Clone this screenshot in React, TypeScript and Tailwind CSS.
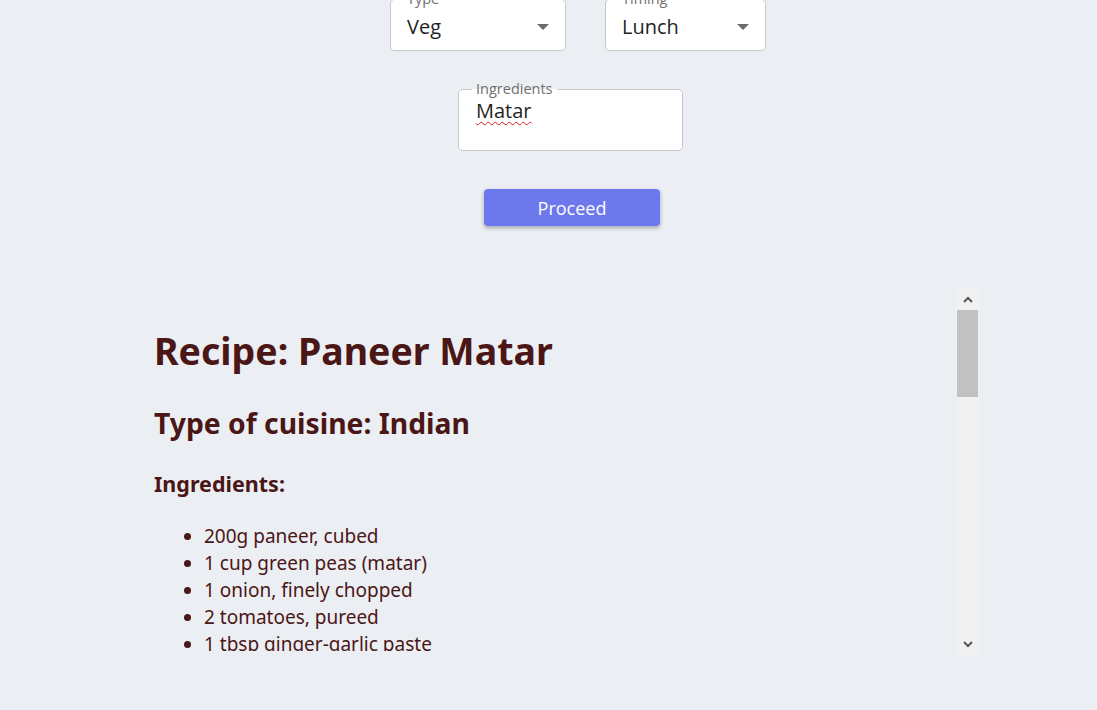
import React from "react";

function Caret() {
  return (
    <svg width="12" height="6" viewBox="0 0 12 6" className="shrink-0">
      <path d="M0 0 L12 0 L6 6 Z" fill="#6b6b6b" />
    </svg>
  );
}

function SelectBox({ label, value, width }: { label: string; value: string; width: string }) {
  return (
    <fieldset className={`${width} h-[59px] border border-[#c8c8c8] rounded-[4px] bg-white pl-[12px] pr-[16px] flex items-center`}>
      <legend className="px-[4px] text-[14.5px] leading-[14px] text-[#6f6f6f]">{label}</legend>
      <div className="flex-1 flex items-center justify-between -mt-[3px]">
        <span className="text-[20px] leading-[26px] text-[#1f1f1f] pl-[4px]">{value}</span>
        <Caret />
      </div>
    </fieldset>
  );
}

export default function App() {
  const items = [
    "200g paneer, cubed",
    "1 cup green peas (matar)",
    "1 onion, finely chopped",
    "2 tomatoes, pureed",
    "1 tbsp ginger-garlic paste",
    "2 green chillies, slit",
    "1 tsp cumin seeds",
  ];
  return (
    <div className="h-[710px] overflow-hidden bg-[#ebeef3] font-['Open_Sans','Noto_Sans',sans-serif]">
      <div className="-mt-[8px] flex flex-col">
        <div className="flex pl-[390px] gap-[39px]">
          <SelectBox label="Type" value="Veg" width="w-[176px]" />
          <SelectBox label="Timing" value="Lunch" width="w-[161px]" />
        </div>
        <div className="mt-[31px] pl-[458px]">
          <fieldset className="w-[225px] h-[69px] border border-[#c8c8c8] rounded-[4px] bg-white pl-[13px] pr-[12px]">
            <legend className="px-[4px] text-[14.5px] leading-[14px] text-[#6f6f6f]">Ingredients</legend>
            <div className="pl-[4px] mt-[2px] text-[20px] leading-[26px] text-[#1f1f1f]">
              <span className="underline decoration-wavy decoration-[#d42020] decoration-1 underline-offset-[3px]">Matar</span>
            </div>
          </fieldset>
        </div>
        <div className="mt-[38px] pl-[484px]">
          <button className="w-[176px] h-[37px] rounded-[4px] bg-[#6c78ec] text-white text-[18px] leading-[24px] shadow-[0_2px_4px_rgba(0,0,0,0.3)]">
            Proceed
          </button>
        </div>
        <div className="mt-[62px] mx-auto w-[861px] h-[367px] flex">
          <div className="flex-1">
            <div className="h-[363px] overflow-hidden pl-[36px] text-[#4b1616] font-['Noto_Sans','Open_Sans',sans-serif]">
              <h1 className="mt-[39px] text-[37.5px] leading-[48px] font-bold">Recipe: Paneer Matar</h1>
              <h2 className="mt-[30px] text-[28.3px] leading-[36px] font-bold">Type of cuisine: Indian</h2>
              <h3 className="mt-[29px] text-[21.5px] leading-[28px] font-bold">Ingredients:</h3>
              <ul className="mt-[25px] pl-[50px] list-disc text-[19px] leading-[27px]">
                {items.map((t) => (
                  <li key={t}>{t}</li>
                ))}
              </ul>
            </div>
          </div>
          <div className="w-[23px] bg-[#f1f1f1] flex flex-col items-center">
            <div className="h-[22px] flex items-center justify-center">
              <svg width="10" height="7" viewBox="0 0 10 7">
                <path d="M1 6 L5 2 L9 6" stroke="#555" strokeWidth="2" fill="none" />
              </svg>
            </div>
            <div className="w-[21px] h-[87px] bg-[#c1c1c1]" />
            <div className="flex-1" />
            <div className="h-[22px] flex items-center justify-center">
              <svg width="10" height="7" viewBox="0 0 10 7">
                <path d="M1 1 L5 5 L9 1" stroke="#555" strokeWidth="2" fill="none" />
              </svg>
            </div>
          </div>
        </div>
      </div>
    </div>
  );
}
